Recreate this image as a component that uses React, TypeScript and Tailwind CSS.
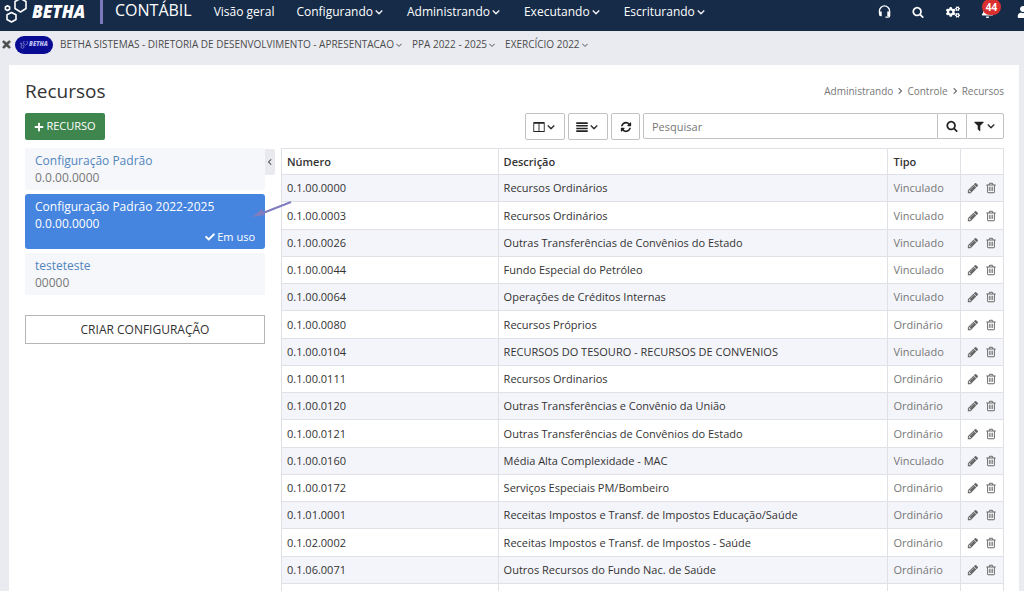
import type { ReactNode } from "react";
import { FaBell, FaCheck, FaCogs, FaPlus, FaTimes, FaUser } from "react-icons/fa";

function Glyph({ d, className = "size-3" }: { d: string; className?: string }) {
  return (
    <svg viewBox="0 0 1792 1792" fill="currentColor" aria-hidden="true" className={`shrink-0 ${className}`}>
      <path d={d} fillRule="evenodd" />
    </svg>
  );
}

const SEARCH =
  "M1216 832q0-185-131.5-316.5t-316.5-131.5-316.5 131.5-131.5 316.5 131.5 316.5 316.5 131.5 316.5-131.5 131.5-316.5zm512 832q0 52-38 90t-90 38q-54 0-90-38l-343-342q-179 124-399 124-143 0-273.5-55.5t-225-150-150-225-55.5-273.5 55.5-273.5 150-225 225-150 273.5-55.5 273.5 55.5 225 150 150 225 55.5 273.5q0 220-124 399l343 343q37 37 37 90z";
const ANGLE_DOWN =
  "M1395 736q0 13-10 23l-466 466q-10 10-23 10t-23-10l-466-466q-10-10-10-23t10-23l50-50q10-10 23-10t23 10l393 393 393-393q10-10 23-10t23 10l50 50q10 10 10 23z";
const PENCIL =
  "M491 1536l91-91-235-235-91 91v107h128v128h107zm523-928q0-22-22-22-10 0-17 7l-542 542q-7 7-7 17 0 22 22 22 10 0 17-7l542-542q7-7 7-17zm-54-192l416 416-832 832h-416v-416zm683 96q0 53-37 90l-166 166-416-416 166-165q36-38 90-38 53 0 91 38l235 234q37 39 37 91z";
const TRASH =
  "M704 736v576q0 14-9 23t-23 9h-64q-14 0-23-9t-9-23v-576q0-14 9-23t23-9h64q14 0 23 9t9 23zm256 0v576q0 14-9 23t-23 9h-64q-14 0-23-9t-9-23v-576q0-14 9-23t23-9h64q14 0 23 9t9 23zm256 0v576q0 14-9 23t-23 9h-64q-14 0-23-9t-9-23v-576q0-14 9-23t23-9h64q14 0 23 9t9 23zm128 724v-948h-896v948q0 22 7 40.5t14.5 27 10.5 8.5h832q3 0 10.5-8.5t14.5-27 7-40.5zm-672-1076h448l-48-117q-7-9-17-11h-317q-10 2-17 11zm928 32v64q0 14-9 23t-23 9h-96v948q0 83-47 143.5t-113 60.5h-832q-66 0-113-58.5t-47-141.5v-952h-96q-14 0-23-9t-9-23v-64q0-14 9-23t23-9h309l70-167q15-37 54-63t79-26h320q40 0 79 26t54 63l70 167h309q14 0 23 9t9 23z";
const REFRESH =
  "M1639 1056q0 5-1 7-64 268-268 434.5t-478 166.5q-146 0-282.5-55t-243.5-157l-129 129q-19 19-45 19t-45-19-19-45v-448q0-26 19-45t45-19h448q26 0 45 19t19 45-19 45l-137 137q71 66 161 102t187 36q134 0 250-65t186-179q11-17 53-117 8-23 30-23h192q13 0 22.5 9.5t9.5 22.5zm25-800v448q0 26-19 45t-45 19h-448q-26 0-45-19t-19-45 19-45l138-138q-148-137-349-137-134 0-250 65t-186 179q-11 17-53 117-8 23-30 23h-199q-13 0-22.5-9.5t-9.5-22.5v-7q65-268 270-434.5t480-166.5q146 0 284 55.5t245 156.5l130-129q19-19 45-19t45 19 19 45z";
const FILTER =
  "M1595 295q17 41-14 70l-493 493v742q0 42-39 59-13 5-25 5-27 0-45-19l-256-256q-19-19-19-45v-486l-493-493q-31-29-14-70 17-39 59-39h1280q42 0 59 39z";
const JUSTIFY =
  "M40 190h1712v240H40zM40 590h1712v240H40zM40 990h1712v240H40zM40 1390h1712v240H40z";
const COLUMNS =
  "M128 150h1536q80 0 80 80v1330q0 80-80 80H128q-80 0-80-80V230q0-80 80-80zm50 250v1110h650V400zm786 0v1110h650V400z";

function Hexagons({ className }: { className: string }) {
  return (
    <svg viewBox="0 0 24 24" fill="none" stroke="currentColor" strokeWidth="1.6" strokeLinejoin="round" aria-hidden="true" className={className}>
      <path d="M16.500 -1.500L22 1.500V8.500L16.500 12L11 8.500V1.500Z" />
      <path d="M7.500 12.500L12 14.800V19.500L7.500 22L3 19.500V14.800Z" />
      <path d="M3.500 5.800L5.600 7V9.300L3.500 10.500L1.400 9.300V7Z" />
    </svg>
  );
}

function Headset({ className }: { className: string }) {
  return (
    <svg viewBox="0 0 14 14" fill="none" stroke="currentColor" aria-hidden="true" className={className}>
      <path d="M1.500 8V6.500a5.500 5.500 0 0 1 11 0V11.500q0 1.500-1.500 1.500H8" strokeWidth="1.400" />
      <path d="M1 7h3v5H3q-2 0-2-2zM10 7h3v5h-3z" fill="currentColor" stroke="none" />
    </svg>
  );
}

const menus = ["Configurando", "Administrando", "Executando", "Escriturando"];

const rows: [string, string, string][] = [
  ["0.1.00.0000", "Recursos Ordinários", "Vinculado"],
  ["0.1.00.0003", "Recursos Ordinários", "Vinculado"],
  ["0.1.00.0026", "Outras Transferências de Convênios do Estado", "Vinculado"],
  ["0.1.00.0044", "Fundo Especial do Petróleo", "Vinculado"],
  ["0.1.00.0064", "Operações de Créditos Internas", "Vinculado"],
  ["0.1.00.0080", "Recursos Próprios", "Ordinário"],
  ["0.1.00.0104", "RECURSOS DO TESOURO - RECURSOS DE CONVENIOS", "Vinculado"],
  ["0.1.00.0111", "Recursos Ordinarios", "Ordinário"],
  ["0.1.00.0120", "Outras Transferências e Convênio da União", "Ordinário"],
  ["0.1.00.0121", "Outras Transferências de Convênios do Estado", "Ordinário"],
  ["0.1.00.0160", "Média Alta Complexidade - MAC", "Vinculado"],
  ["0.1.00.0172", "Serviços Especiais PM/Bombeiro", "Ordinário"],
  ["0.1.01.0001", "Receitas Impostos e Transf. de Impostos Educação/Saúde", "Ordinário"],
  ["0.1.02.0002", "Receitas Impostos e Transf. de Impostos - Saúde", "Ordinário"],
  ["0.1.06.0071", "Outros Recursos do Fundo Nac. de Saúde", "Ordinário"],
];

function ContextButton({ children }: { children: ReactNode }) {
  return (
    <button type="button" className="flex items-center whitespace-nowrap">
      {children}
      <Glyph d={ANGLE_DOWN} className="size-2.5" />
    </button>
  );
}

function ToolButton({ label, children, className = "w-10" }: { label: string; children: ReactNode; className?: string }) {
  return (
    <button type="button" aria-label={label} className={`flex h-[27px] items-center justify-center rounded-xs border border-[#c2c2c2] bg-white ${className}`}>
      {children}
    </button>
  );
}

function TopBar() {
  return (
    <header className="flex h-[31px] items-start bg-[#152b48] text-white">
      <div className="flex h-[23px] items-center pl-1">
        <Hexagons className="size-6" />
        <span className="ml-1 w-[58px] text-[17px] leading-5 font-extrabold italic">BETHA</span>
      </div>
      <div className="ml-2.5 h-6 w-[3px] bg-[#7e78bd]" />
      <span className="ml-3 text-base leading-[21px]">CONTÁBIL</span>
      <nav className="ml-[22px] flex h-[23px] flex-1 items-center gap-[22px] text-[12px]">
        <a href="#visao">Visão geral</a>
        {menus.map((m) => (
          <button key={m} type="button" className="flex items-center">
            {m}
            <Glyph d={ANGLE_DOWN} className="size-3 stroke-current stroke-[90]" />
          </button>
        ))}
      </nav>
      <div className="-mr-4 flex h-[23px] shrink-0 items-center">
        <button type="button" aria-label="Suporte" className="w-[34px]"><Headset className="mx-auto size-[13px]" /></button>
        <button type="button" aria-label="Buscar" className="w-[34px]"><Glyph d={SEARCH} className="mx-auto size-3" /></button>
        <button type="button" aria-label="Configurações" className="w-[35px]"><FaCogs className="mx-auto size-[14px]" /></button>
        <button type="button" aria-label="Notificações" className="relative w-[35px]">
          <FaBell className="mx-auto size-[13px]" />
          <span className="absolute -top-1.5 left-3 h-4 w-[19px] rounded-full bg-[#d9302f] text-center text-[10px] leading-4 font-bold">44</span>
        </button>
        <button type="button" aria-label="Usuário" className="w-[35px]"><FaUser className="mx-auto size-3" /></button>
      </div>
    </header>
  );
}

function ContextBar() {
  return (
    <div className="flex h-[27px] items-center text-[10px] text-[#4c4c4c]">
      <button type="button" aria-label="Fechar" className="ml-px"><FaTimes className="size-[11px] stroke-current stroke-[40]" /></button>
      <span className="ml-[3px] flex h-[18px] w-[38px] items-center justify-center gap-px rounded-full bg-[#0a0b93] text-[#b9bdf0]">
        <Hexagons className="size-2" />
        <span className="text-[6px] font-extrabold italic">BETHA</span>
      </span>
      <div className="ml-[7px] flex gap-2">
        <ContextButton>BETHA SISTEMAS - DIRETORIA DE DESENVOLVIMENTO - APRESENTACAO</ContextButton>
        <ContextButton>PPA 2022 - 2025</ContextButton>
        <ContextButton>EXERCÍCIO 2022</ContextButton>
      </div>
    </div>
  );
}

function Sidebar() {
  return (
    <aside className="relative w-60 shrink-0 text-[12px] leading-[17px]">
      <a href="#padrao" className="block h-[42px] rounded-xs bg-[#f6f7fb] px-2.5 pt-1">
        <span className="block text-[#5185bd]">Configuração Padrão</span>
        <span className="block text-[#777]">0.0.00.0000</span>
      </a>
      <button type="button" aria-label="Recolher" className="absolute top-px -right-2.5 flex h-[26px] w-2.5 items-center justify-center rounded-r-xs bg-[#e9eaf0] text-[#555]">
        <Glyph d={ANGLE_DOWN} className="size-2.5 rotate-90 stroke-current stroke-[60]" />
      </button>
      <a href="#padrao-2022" className="relative mt-1 block h-[55px] rounded-[3px] bg-[#4585df] px-2.5 pt-1 text-white">
        <span className="block">Configuração Padrão 2022-2025</span>
        <span className="block">0.0.00.0000</span>
        <span className="-mt-1 flex items-center justify-end gap-0.5 text-[11px]">
          <FaCheck className="size-2.5" />
          Em uso
        </span>
        <svg viewBox="0 0 40 18" aria-hidden="true" className="absolute top-1.5 -right-[27px] h-[18px] w-10">
          <path d="M39 2L11 13" stroke="#7f7cc0" strokeWidth="2" fill="none" />
          <path d="M0 17L10 9L13 15Z" fill="#7f7cc0" />
        </svg>
      </a>
      <a href="#teste" className="mt-1 block h-[42px] rounded-xs bg-[#f6f7fb] px-2.5 pt-1">
        <span className="block text-[#5185bd]">testeteste</span>
        <span className="block text-[#777]">00000</span>
      </a>
      <button type="button" className="mt-5 h-[29px] w-full border border-[#b5b5b5] bg-white text-[#333]">CRIAR CONFIGURAÇÃO</button>
    </aside>
  );
}

function Toolbar() {
  return (
    <div className="flex h-[35px] items-start text-[#222]">
      <button type="button" className="flex h-[27px] w-20 items-center justify-center gap-0.5 rounded-xs bg-[#3f864e] text-[11px] text-white">
        <FaPlus className="size-[10px]" />
        RECURSO
      </button>
      <div className="ml-auto flex gap-[3px]">
        <ToolButton label="Colunas"><Glyph d={COLUMNS} /><Glyph d={ANGLE_DOWN} className="size-3 stroke-current stroke-[90]" /></ToolButton>
        <ToolButton label="Densidade"><Glyph d={JUSTIFY} /><Glyph d={ANGLE_DOWN} className="size-3 stroke-current stroke-[90]" /></ToolButton>
        <ToolButton label="Atualizar" className="w-[29px]"><Glyph d={REFRESH} /></ToolButton>
      </div>
      <form className="ml-[3px] flex w-[361px]">
        <input type="search" aria-label="Pesquisar" placeholder="Pesquisar" className="h-[26px] min-w-0 flex-1 rounded-l-xs border border-[#c2c2c2] px-2 text-[11px] placeholder:text-[#777]" />
        <button type="button" aria-label="Pesquisar recursos" className="flex h-[26px] w-7 items-center justify-center border-y border-[#c2c2c2]"><Glyph d={SEARCH} className="size-3" /></button>
        <button type="button" aria-label="Filtrar" className="flex h-[26px] w-[38px] items-center justify-center rounded-r-xs border border-[#c2c2c2]"><Glyph d={FILTER} /><Glyph d={ANGLE_DOWN} className="size-3 stroke-current stroke-[90]" /></button>
      </form>
    </div>
  );
}

function ResourceTable() {
  return (
    <table className="min-w-0 flex-1 table-fixed border-collapse text-left text-[11px] leading-4 text-[#333] [&_td]:border [&_td]:border-[#dfe1e6] [&_td]:px-[5px] [&_td]:py-0 [&_th]:border [&_th]:border-[#dfe1e6] [&_th]:px-[5px] [&_th]:font-semibold">
      <colgroup>
        <col className="w-[30%]" />
        <col className="w-[54%]" />
        <col className="w-[10%]" />
        <col className="w-[6%]" />
      </colgroup>
      <thead>
        <tr className="h-[26px]">
          <th>Número</th>
          <th>Descrição</th>
          <th>Tipo</th>
          <th aria-label="Ações" />
        </tr>
      </thead>
      <tbody>
        {rows.map(([code, description, kind]) => (
          <tr key={code} className="h-[27px] odd:bg-[#f4f5fa] [&:nth-child(4n+2)]:h-7">
            <td>{code}</td>
            <td>{description}</td>
            <td className="text-[#777]">{kind}</td>
            <td className="text-[#666]">
              <div className="flex items-center justify-center gap-1.5">
                <button type="button" aria-label={`Editar ${code}`}><Glyph d={PENCIL} className="size-3" /></button>
                <button type="button" aria-label={`Excluir ${code}`}><Glyph d={TRASH} className="size-3" /></button>
              </div>
            </td>
          </tr>
        ))}
        <tr className="h-7">
          <td /><td /><td /><td />
        </tr>
      </tbody>
    </table>
  );
}

export default function App() {
  return (
    <div className="h-screen overflow-hidden bg-[#e9ebf0] font-['Open_Sans','Noto_Sans',sans-serif]">
      <TopBar />
      <ContextBar />
      <main className="mt-[7px] mr-[5px] ml-[9px] bg-white pr-[15px] pb-6 pl-4">
        <div className="flex h-12 items-center justify-between pt-1">
          <h1 className="text-[19px] text-[#333]">Recursos</h1>
          <nav aria-label="Trilha" className="flex items-center gap-0.5 text-[10px] text-[#777]">
            <a href="#administrando">Administrando</a>
            <Glyph d={ANGLE_DOWN} className="size-2.5 -rotate-90 stroke-current stroke-[130]" />
            <a href="#controle">Controle</a>
            <Glyph d={ANGLE_DOWN} className="size-2.5 -rotate-90 stroke-current stroke-[130]" />
            <span>Recursos</span>
          </nav>
        </div>
        <Toolbar />
        <div className="flex items-start gap-4">
          <Sidebar />
          <ResourceTable />
        </div>
      </main>
    </div>
  );
}
